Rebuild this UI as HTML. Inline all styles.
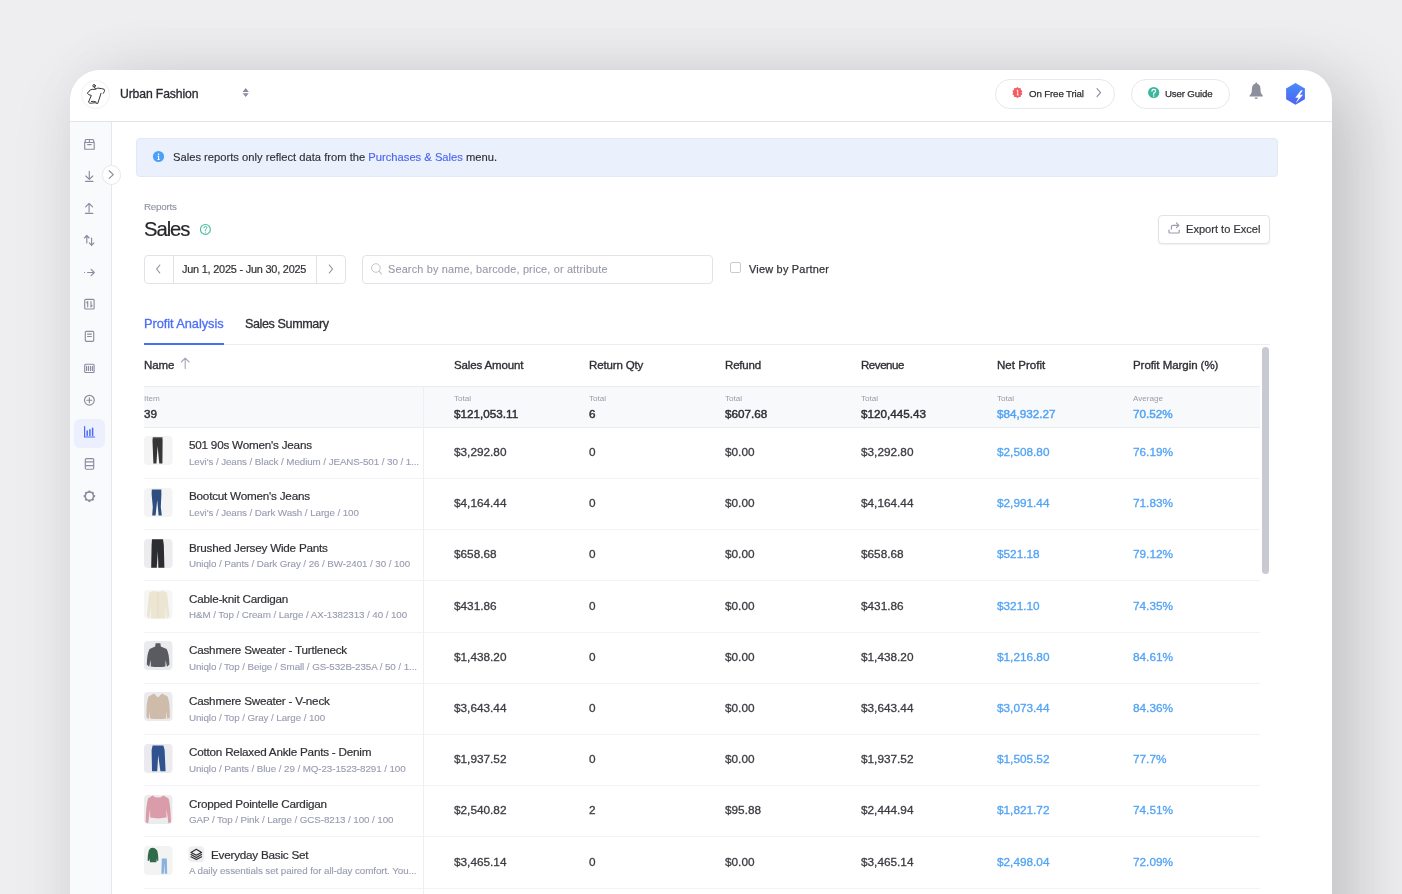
<!DOCTYPE html>
<html><head><meta charset="utf-8">
<style>
*{box-sizing:border-box;margin:0;padding:0}
html,body{width:1402px;height:894px;overflow:hidden}
body{position:relative;background:#eeeef0;font-family:"Liberation Sans",sans-serif;color:#2b2c31}
.a{position:absolute}
.t{position:absolute;white-space:nowrap;line-height:1;will-change:transform}
svg{position:absolute;overflow:visible}
#card{position:absolute;left:70px;top:70px;width:1262px;height:900px;background:#fff;border-radius:30px 30px 0 0;box-shadow:0 12px 70px rgba(0,0,0,0.07), 28px 12px 70px rgba(0,0,0,0.14)}
.hl{position:absolute;height:1px;background:#ededf1}
.vl{position:absolute;width:1px;background:#ededf1}
.pill{position:absolute;border:1px solid #e7e8ed;border-radius:16px;background:#fff}
.box{position:absolute;border:1px solid #e2e3e8;border-radius:4px;background:#fff}
.thumb{position:absolute;width:28px;height:29px;border-radius:4px;background:#f3f3f4;overflow:hidden}
</style></head><body>
<div id="card"></div>
<div class="hl" style="left:70px;top:121px;width:1262px;background:#e3e4ea"></div>
<div class="a" style="left:70px;top:122px;width:41px;height:772px;background:#f9fafc"></div>
<div class="vl" style="left:111px;top:122px;height:772px;background:#e6e7ec"></div>
<div class="a" style="left:80.8px;top:79.8px;width:29px;height:29px;border-radius:50%;border:1px solid #f1f1f4;background:#fff"></div>
<div class="t" style="left:119.80px;top:88.17px;font-size:12.2px;color:#2a2b30;letter-spacing:-0.121px;-webkit-text-stroke:0.3px #2a2b30;">Urban Fashion</div>
<div class="pill" style="left:995px;top:79px;width:120px;height:30px"></div>
<div class="pill" style="left:1131px;top:79px;width:99px;height:30px"></div>
<div class="t" style="left:1029.00px;top:89.39px;font-size:9.7px;color:#2f3035;letter-spacing:-0.128px;-webkit-text-stroke:0.25px #2f3035;">On Free Trial</div>
<div class="t" style="left:1165.40px;top:89.39px;font-size:9.7px;color:#2f3035;letter-spacing:-0.156px;-webkit-text-stroke:0.25px #2f3035;">User Guide</div>
<div class="a" style="left:136px;top:138px;width:1142px;height:38.5px;border-radius:4px;background:#ebf1fc;border:1px solid #e1e8f6"></div>
<div class="t" style="left:173.40px;top:151.92px;font-size:11.2px;color:#2f3035;letter-spacing:0.002px;-webkit-text-stroke:0.15px #2f3035;">Sales reports only reflect data from the <span style="color:#4b66f1;-webkit-text-stroke:0.15px #4b66f1">Purchases &amp; Sales</span> menu.</div>
<div class="t" style="left:143.80px;top:202.40px;font-size:9.8px;color:#8e91a0;letter-spacing:-0.219px;-webkit-text-stroke:0.1px #8e91a0;">Reports</div>
<div class="t" style="left:144.20px;top:218.90px;font-size:20.2px;color:#25262b;letter-spacing:-1.025px;-webkit-text-stroke:0.2px #25262b;">Sales</div>
<div class="box" style="left:1158px;top:215px;width:112px;height:29px;box-shadow:0 1px 2px rgba(0,0,0,0.06)"></div>
<div class="t" style="left:1185.70px;top:224.00px;font-size:11.1px;color:#34353a;letter-spacing:-0.008px;-webkit-text-stroke:0.2px #34353a;">Export to Excel</div>
<div class="box" style="left:144px;top:255px;width:202px;height:29px"></div>
<div class="vl" style="left:173px;top:256px;height:27px;background:#e2e3e8"></div>
<div class="vl" style="left:316px;top:256px;height:27px;background:#e2e3e8"></div>
<div class="t" style="left:182.40px;top:263.77px;font-size:10.9px;color:#2f3035;letter-spacing:-0.207px;-webkit-text-stroke:0.2px #2f3035;">Jun 1, 2025 - Jun 30, 2025</div>
<div class="box" style="left:362px;top:255px;width:351px;height:29px"></div>
<div class="t" style="left:388.20px;top:263.77px;font-size:10.9px;color:#9799aa;letter-spacing:0.165px;-webkit-text-stroke:0.1px #9799aa;">Search by name, barcode, price, or attribute</div>
<div class="a" style="left:730px;top:262px;width:11px;height:11px;border:1px solid #c9cad3;border-radius:2px"></div>
<div class="t" style="left:749.00px;top:263.97px;font-size:10.9px;color:#34353a;letter-spacing:0.237px;-webkit-text-stroke:0.25px #34353a;">View by Partner</div>
<div class="t" style="left:143.80px;top:318.06px;font-size:12.8px;color:#4b6ef6;letter-spacing:-0.055px;-webkit-text-stroke:0.3px #4b6ef6;">Profit Analysis</div>
<div class="t" style="left:244.70px;top:318.23px;font-size:12.6px;color:#2f3035;letter-spacing:-0.408px;-webkit-text-stroke:0.3px #2f3035;">Sales Summary</div>
<div class="hl" style="left:144px;top:344px;width:1126px;background:#ededf1"></div>
<div class="a" style="left:144px;top:343px;width:80px;height:2px;background:#4b6ef6"></div>
<svg style="left:0;top:0" width="1" height="1">
<g fill="none" stroke="#2a2a2e" stroke-width="0.95" stroke-linecap="round" stroke-linejoin="round">
<circle cx="94.1" cy="85.8" r="1.25"/>
<path d="M94.4 87.1 L95.6 89"/>
<path d="M89.3 90.9 Q90.6 89.6 92.1 89.3 Q94 89.6 95.8 89.1 Q96.8 88.3 97.8 88.1 Q101.5 88.4 104.2 89.3 Q104.9 90.3 104.4 91.4 L103.3 93.3"/>
<path d="M89.3 90.9 Q88 91.8 87.4 93.4 Q88.4 95 91.3 95.4 L88.5 102.2 Q89.2 103.4 91.5 103.2 Q94.5 102.5 95.5 102.9 Q96.8 103.7 97.8 103.4 L101 93.3"/>
<path d="M91.4 101.4 Q93.6 101.3 95 101.6 L96.2 102.2"/>
</g>
<path d="M245.7 87.9 L248.8 91.9 L242.6 91.9 Z M242.7 93.2 L248.7 93.2 L245.7 97.1 Z" fill="#8a8c9f"/>
<!-- red badge -->
<path d="M1017.4 87 L1018.8 88.2 L1020.6 88.1 L1020.9 89.9 L1022.4 91 L1021.6 92.6 L1022.4 94.2 L1020.9 95.2 L1020.6 97 L1018.8 96.9 L1017.4 98 L1016 96.9 L1014.2 97 L1013.9 95.2 L1012.4 94.2 L1013.2 92.6 L1012.4 91 L1013.9 89.9 L1014.2 88.1 L1016 88.2 Z" fill="#f65b62"/>
<path d="M1016.7 90.6 L1017.7 90 L1017.7 94.9 M1016.8 94.9 L1018.7 94.9" stroke="#fff" stroke-width="0.9" fill="none"/>
<!-- chevron in pill -->
<path d="M1097 88.6 L1100.6 92.6 L1097 96.6" stroke="#8a8c9f" stroke-width="1.1" fill="none" stroke-linecap="round" stroke-linejoin="round"/>
<!-- green ? -->
<circle cx="1153.7" cy="92.5" r="5.6" fill="#3bb79c"/>
<path d="M1151.9 91.1 Q1152 89.3 1153.8 89.3 Q1155.6 89.3 1155.6 90.9 Q1155.6 92 1154.4 92.6 Q1153.7 93 1153.7 94.3" stroke="#fff" stroke-width="1.2" fill="none" stroke-linecap="round"/>
<circle cx="1153.7" cy="96" r="0.75" fill="#fff"/>
<!-- bell -->
<path d="M1256.2 82.2 Q1257 82.4 1257 83.6 Q1260.2 84.7 1260.4 88.3 L1260.7 92.2 Q1261.2 94.2 1262.8 95.4 L1262.8 96.5 L1249.6 96.5 L1249.6 95.4 Q1251.2 94.2 1251.7 92.2 L1252 88.3 Q1252.2 84.7 1255.4 83.6 Q1255.4 82.4 1256.2 82.2 Z" fill="#8c8e9c"/>
<path d="M1254.5 97.4 L1257.9 97.4 Q1257.5 99 1256.2 99 Q1254.9 99 1254.5 97.4 Z" fill="#8c8e9c"/>
<!-- hexagon -->
<defs><linearGradient id="hexg" x1="0" y1="0" x2="0" y2="1"><stop offset="0" stop-color="#4a8bf9"/><stop offset="1" stop-color="#4e63f4"/></linearGradient></defs>
<path d="M1295.5 83 L1304.9 88.4 L1304.9 99.3 L1295.5 104.7 L1286.1 99.3 L1286.1 88.4 Z" fill="url(#hexg)"/>
<path d="M1301 90.2 L1295.3 97.8 L1298.5 97.8 L1295.6 103.4 L1303 94.8 L1299.7 94.8 L1302.8 90.5 Z" fill="#fff"/>
</svg>
<div class="a" style="left:74px;top:418.5px;width:30.5px;height:29.5px;border-radius:6px;background:#eceffd"></div>
<svg style="left:0;top:0" width="1" height="1">
<g fill="none" stroke="#8a8d9f" stroke-width="1.15" stroke-linecap="round" stroke-linejoin="round">
<path d="M84.7 142.5 L85.8 139.5 L93 139.5 L94.2 142.5 M84.7 142.5 L94.2 142.5 L94.2 149.2 L84.7 149.2 Z M89.45 139.5 L89.45 142.5 M87.6 144.6 L91.2 144.6"/>
<path d="M89.3 171.3 L89.3 179.2 M85.8 176 L89.3 179.4 L92.8 176 M85.6 181.4 L92.9 181.4"/>
<path d="M89.1 203.4 L89.1 212 M85.6 206.9 L89.1 203.4 L92.6 206.9 M85.4 213.4 L92.8 213.4"/>
<path d="M86.8 235.5 L86.8 243 M84.5 238 L86.8 235.5 L89.1 238 M91.6 238 L91.6 245.4 M89.3 242.9 L91.6 245.4 L93.9 242.9"/>
<path d="M84.5 272.5 L84.6 272.5 M87.6 272.5 L94.2 272.5 M91.1 269.4 L94.3 272.5 L91.1 275.6"/>
<rect x="84.7" y="299.4" width="9.4" height="9.6" rx="1"/>
<path d="M87.7 301.5 L87.7 306.8 M86.7 302.7 L87.7 301.5 M91 301.6 L91 306.9 L92.1 305.6"/>
<rect x="85.3" y="331.4" width="8.4" height="9.9" rx="1"/>
<path d="M87.5 334.1 L91.4 334.1 M87.5 336.5 L91.4 336.5"/>
<rect x="84.7" y="364.2" width="9.4" height="8.3" rx="1"/>
<path d="M86.6 366.4 L86.6 370.4 M88.5 366.4 L88.5 370.4 M90.5 366.4 L90.5 370.4 M92.4 366.4 L92.4 370.4"/>
<circle cx="89.4" cy="400.2" r="4.9"/>
<path d="M86.9 400.2 L91.9 400.2 M89.4 397.7 L89.4 402.7"/>
<rect x="85.3" y="458.6" width="8.4" height="10.6" rx="1.2"/>
<path d="M85.5 461.9 L93.5 461.9 M85.5 465.6 L93.5 465.6"/>
<circle cx="89.4" cy="496.2" r="4.1" stroke-width="1.5"/><rect x="88.30" y="490.50" width="2.2" height="2" rx="0.4" fill="#8a8d9f" stroke="none" transform="rotate(0 89.4 496.2)"/><rect x="88.30" y="490.50" width="2.2" height="2" rx="0.4" fill="#8a8d9f" stroke="none" transform="rotate(45 89.4 496.2)"/><rect x="88.30" y="490.50" width="2.2" height="2" rx="0.4" fill="#8a8d9f" stroke="none" transform="rotate(90 89.4 496.2)"/><rect x="88.30" y="490.50" width="2.2" height="2" rx="0.4" fill="#8a8d9f" stroke="none" transform="rotate(135 89.4 496.2)"/><rect x="88.30" y="490.50" width="2.2" height="2" rx="0.4" fill="#8a8d9f" stroke="none" transform="rotate(180 89.4 496.2)"/><rect x="88.30" y="490.50" width="2.2" height="2" rx="0.4" fill="#8a8d9f" stroke="none" transform="rotate(225 89.4 496.2)"/><rect x="88.30" y="490.50" width="2.2" height="2" rx="0.4" fill="#8a8d9f" stroke="none" transform="rotate(270 89.4 496.2)"/><rect x="88.30" y="490.50" width="2.2" height="2" rx="0.4" fill="#8a8d9f" stroke="none" transform="rotate(315 89.4 496.2)"/>
</g>
<g stroke="#4d6cf6" fill="none" stroke-linecap="round">
<path d="M84.6 426.6 L84.6 437 L94.6 437" stroke-width="1.2"/>
<path d="M87.2 431 L87.2 435.4 M89.9 429.7 L89.9 435.4 M92.6 428.3 L92.6 435.4" stroke-width="1.5"/>
</g>
</svg>
<div class="a" style="left:101.5px;top:165px;width:19.5px;height:19.5px;border-radius:50%;background:#fff;border:1px solid #e7e8ec"></div>
<svg style="left:0;top:0" width="1" height="1"><path d="M109.2 170.8 L113.3 174.6 L109.2 178.4" fill="none" stroke="#8a8d9f" stroke-width="1.2" stroke-linecap="round" stroke-linejoin="round"/></svg>
<svg style="left:0;top:0" width="1" height="1">
<circle cx="158.5" cy="156.5" r="5.6" fill="#4da0f7"/>
<circle cx="158.55" cy="154.3" r="0.8" fill="#fff"/>
<path d="M157.6 156.2 L158.6 156.2 L158.6 159.4 M157.5 159.5 L159.7 159.5" stroke="#fff" stroke-width="1.1" fill="none"/>
<circle cx="205.4" cy="229.4" r="4.95" fill="none" stroke="#45bb9e" stroke-width="1.1"/>
<path d="M203.9 227.9 Q204 226.4 205.5 226.4 Q206.9 226.4 206.9 227.7 Q206.9 228.6 206 229.1 Q205.4 229.5 205.4 230.5" stroke="#45bb9e" stroke-width="1" fill="none" stroke-linecap="round"/>
<circle cx="205.4" cy="232.1" r="0.6" fill="#45bb9e"/>
<g fill="none" stroke="#9a9cae" stroke-width="1.2" stroke-linecap="round" stroke-linejoin="round">
<path d="M1169 230 L1169 232.2 Q1169 233 1169.8 233 L1178.4 233 Q1179.2 233 1179.2 232.2 L1179.2 230"/>
<path d="M1171.4 229.1 L1171.4 227 Q1171.4 225.3 1173.1 225.3 L1178.5 225.3 M1176.5 222.9 L1178.8 225.3 L1176.5 227.7"/>
</g>
<path d="M159.8 265 L156.6 269 L159.8 273" fill="none" stroke="#8a8d9f" stroke-width="1.1" stroke-linecap="round" stroke-linejoin="round"/>
<path d="M329.3 265 L332.5 269 L329.3 273" fill="none" stroke="#8a8d9f" stroke-width="1.1" stroke-linecap="round" stroke-linejoin="round"/>
<circle cx="375.9" cy="268" r="4.3" fill="none" stroke="#c2c3cb" stroke-width="1"/>
<path d="M379 271.2 L381.4 273.8" stroke="#c2c3cb" stroke-width="1.1" stroke-linecap="round"/>
</svg>
<div class="a" style="left:144px;top:386px;width:1116px;height:41px;background:#f8f9fb"></div>
<div class="hl" style="left:144px;top:385.6px;width:1116px;background:#ebecf0"></div>
<div class="hl" style="left:144px;top:426.5px;width:1116px;background:#ebecf0"></div>
<div class="t" style="left:144.00px;top:360.27px;font-size:11.5px;color:#2f3035;letter-spacing:-0.062px;-webkit-text-stroke:0.35px #2f3035;">Name</div>
<svg style="left:0;top:0" width="1" height="1"><path d="M185.2 358.2 L185.2 368.4 M181.3 362 L185.2 358.1 L189.1 362" fill="none" stroke="#a4a6b5" stroke-width="1.1" stroke-linecap="round" stroke-linejoin="round"/></svg>
<div class="t" style="left:453.60px;top:360.27px;font-size:11.5px;color:#2f3035;letter-spacing:-0.143px;-webkit-text-stroke:0.35px #2f3035;">Sales Amount</div>
<div class="t" style="left:589.40px;top:360.27px;font-size:11.5px;color:#2f3035;letter-spacing:-0.145px;-webkit-text-stroke:0.35px #2f3035;">Return Qty</div>
<div class="t" style="left:725.20px;top:360.27px;font-size:11.5px;color:#2f3035;letter-spacing:-0.179px;-webkit-text-stroke:0.35px #2f3035;">Refund</div>
<div class="t" style="left:861.00px;top:360.27px;font-size:11.5px;color:#2f3035;letter-spacing:-0.441px;-webkit-text-stroke:0.35px #2f3035;">Revenue</div>
<div class="t" style="left:996.90px;top:360.27px;font-size:11.5px;color:#2f3035;letter-spacing:0.040px;-webkit-text-stroke:0.35px #2f3035;">Net Profit</div>
<div class="t" style="left:1132.70px;top:360.27px;font-size:11.5px;color:#2f3035;letter-spacing:-0.055px;-webkit-text-stroke:0.35px #2f3035;">Profit Margin (%)</div>
<div class="t" style="left:144.00px;top:394.94px;font-size:8.1px;color:#9a9cab;">Item</div>
<div class="t" style="left:144.00px;top:407.50px;font-size:11.7px;color:#2f3035;-webkit-text-stroke:0.45px #2f3035;">39</div>
<div class="t" style="left:453.60px;top:394.94px;font-size:8.1px;color:#9a9cab;">Total</div>
<div class="t" style="left:453.60px;top:407.50px;font-size:11.7px;color:#2f3035;-webkit-text-stroke:0.45px #2f3035;">$121,053.11</div>
<div class="t" style="left:589.40px;top:394.94px;font-size:8.1px;color:#9a9cab;">Total</div>
<div class="t" style="left:589.40px;top:407.50px;font-size:11.7px;color:#2f3035;-webkit-text-stroke:0.45px #2f3035;">6</div>
<div class="t" style="left:725.20px;top:394.94px;font-size:8.1px;color:#9a9cab;">Total</div>
<div class="t" style="left:725.20px;top:407.50px;font-size:11.7px;color:#2f3035;-webkit-text-stroke:0.45px #2f3035;">$607.68</div>
<div class="t" style="left:861.00px;top:394.94px;font-size:8.1px;color:#9a9cab;">Total</div>
<div class="t" style="left:861.00px;top:407.50px;font-size:11.7px;color:#2f3035;-webkit-text-stroke:0.45px #2f3035;">$120,445.43</div>
<div class="t" style="left:996.90px;top:394.94px;font-size:8.1px;color:#9a9cab;">Total</div>
<div class="t" style="left:996.90px;top:407.50px;font-size:11.7px;color:#52a3f4;-webkit-text-stroke:0.45px #52a3f4;">$84,932.27</div>
<div class="t" style="left:1132.70px;top:394.94px;font-size:8.1px;color:#9a9cab;">Average</div>
<div class="t" style="left:1132.70px;top:407.50px;font-size:11.7px;color:#52a3f4;-webkit-text-stroke:0.45px #52a3f4;">70.52%</div>
<div class="hl" style="left:144px;top:477.9px;width:1116px;background:#f3f3f6"></div>
<div class="t" style="left:188.60px;top:439.20px;font-size:11.7px;color:#303136;-webkit-text-stroke:0.2px #303136;letter-spacing:-0.22px;">501 90s Women's Jeans</div>
<div class="t" style="left:188.60px;top:456.80px;font-size:9.8px;color:#989bb0;-webkit-text-stroke:0.12px #989bb0;letter-spacing:-0.08px;">Levi's / Jeans / Black / Medium / JEANS-501 / 30 / 1...</div>
<div class="t" style="left:453.60px;top:446.91px;font-size:11.8px;color:#3b3c42;-webkit-text-stroke:0.3px #3b3c42;">$3,292.80</div>
<div class="t" style="left:589.40px;top:446.91px;font-size:11.8px;color:#3b3c42;-webkit-text-stroke:0.3px #3b3c42;">0</div>
<div class="t" style="left:725.20px;top:446.91px;font-size:11.8px;color:#3b3c42;-webkit-text-stroke:0.3px #3b3c42;">$0.00</div>
<div class="t" style="left:861.00px;top:446.91px;font-size:11.8px;color:#3b3c42;-webkit-text-stroke:0.3px #3b3c42;">$3,292.80</div>
<div class="t" style="left:996.90px;top:446.91px;font-size:11.8px;color:#52a3f4;-webkit-text-stroke:0.3px #52a3f4;">$2,508.80</div>
<div class="t" style="left:1132.70px;top:446.91px;font-size:11.8px;color:#52a3f4;-webkit-text-stroke:0.3px #52a3f4;">76.19%</div>
<div class="hl" style="left:144px;top:529.1px;width:1116px;background:#f3f3f6"></div>
<div class="t" style="left:188.60px;top:490.40px;font-size:11.7px;color:#303136;-webkit-text-stroke:0.2px #303136;letter-spacing:-0.22px;">Bootcut Women's Jeans</div>
<div class="t" style="left:188.60px;top:508.00px;font-size:9.8px;color:#989bb0;-webkit-text-stroke:0.12px #989bb0;letter-spacing:-0.08px;">Levi's / Jeans / Dark Wash / Large / 100</div>
<div class="t" style="left:453.60px;top:498.11px;font-size:11.8px;color:#3b3c42;-webkit-text-stroke:0.3px #3b3c42;">$4,164.44</div>
<div class="t" style="left:589.40px;top:498.11px;font-size:11.8px;color:#3b3c42;-webkit-text-stroke:0.3px #3b3c42;">0</div>
<div class="t" style="left:725.20px;top:498.11px;font-size:11.8px;color:#3b3c42;-webkit-text-stroke:0.3px #3b3c42;">$0.00</div>
<div class="t" style="left:861.00px;top:498.11px;font-size:11.8px;color:#3b3c42;-webkit-text-stroke:0.3px #3b3c42;">$4,164.44</div>
<div class="t" style="left:996.90px;top:498.11px;font-size:11.8px;color:#52a3f4;-webkit-text-stroke:0.3px #52a3f4;">$2,991.44</div>
<div class="t" style="left:1132.70px;top:498.11px;font-size:11.8px;color:#52a3f4;-webkit-text-stroke:0.3px #52a3f4;">71.83%</div>
<div class="hl" style="left:144px;top:580.3px;width:1116px;background:#f3f3f6"></div>
<div class="t" style="left:188.60px;top:541.60px;font-size:11.7px;color:#303136;-webkit-text-stroke:0.2px #303136;letter-spacing:-0.22px;">Brushed Jersey Wide Pants</div>
<div class="t" style="left:188.60px;top:559.20px;font-size:9.8px;color:#989bb0;-webkit-text-stroke:0.12px #989bb0;letter-spacing:-0.08px;">Uniqlo / Pants / Dark Gray / 26 / BW-2401 / 30 / 100</div>
<div class="t" style="left:453.60px;top:549.31px;font-size:11.8px;color:#3b3c42;-webkit-text-stroke:0.3px #3b3c42;">$658.68</div>
<div class="t" style="left:589.40px;top:549.31px;font-size:11.8px;color:#3b3c42;-webkit-text-stroke:0.3px #3b3c42;">0</div>
<div class="t" style="left:725.20px;top:549.31px;font-size:11.8px;color:#3b3c42;-webkit-text-stroke:0.3px #3b3c42;">$0.00</div>
<div class="t" style="left:861.00px;top:549.31px;font-size:11.8px;color:#3b3c42;-webkit-text-stroke:0.3px #3b3c42;">$658.68</div>
<div class="t" style="left:996.90px;top:549.31px;font-size:11.8px;color:#52a3f4;-webkit-text-stroke:0.3px #52a3f4;">$521.18</div>
<div class="t" style="left:1132.70px;top:549.31px;font-size:11.8px;color:#52a3f4;-webkit-text-stroke:0.3px #52a3f4;">79.12%</div>
<div class="hl" style="left:144px;top:631.5px;width:1116px;background:#f3f3f6"></div>
<div class="t" style="left:188.60px;top:592.80px;font-size:11.7px;color:#303136;-webkit-text-stroke:0.2px #303136;letter-spacing:-0.22px;">Cable-knit Cardigan</div>
<div class="t" style="left:188.60px;top:610.40px;font-size:9.8px;color:#989bb0;-webkit-text-stroke:0.12px #989bb0;letter-spacing:-0.08px;">H&amp;M / Top / Cream / Large / AX-1382313 / 40 / 100</div>
<div class="t" style="left:453.60px;top:600.51px;font-size:11.8px;color:#3b3c42;-webkit-text-stroke:0.3px #3b3c42;">$431.86</div>
<div class="t" style="left:589.40px;top:600.51px;font-size:11.8px;color:#3b3c42;-webkit-text-stroke:0.3px #3b3c42;">0</div>
<div class="t" style="left:725.20px;top:600.51px;font-size:11.8px;color:#3b3c42;-webkit-text-stroke:0.3px #3b3c42;">$0.00</div>
<div class="t" style="left:861.00px;top:600.51px;font-size:11.8px;color:#3b3c42;-webkit-text-stroke:0.3px #3b3c42;">$431.86</div>
<div class="t" style="left:996.90px;top:600.51px;font-size:11.8px;color:#52a3f4;-webkit-text-stroke:0.3px #52a3f4;">$321.10</div>
<div class="t" style="left:1132.70px;top:600.51px;font-size:11.8px;color:#52a3f4;-webkit-text-stroke:0.3px #52a3f4;">74.35%</div>
<div class="hl" style="left:144px;top:682.7px;width:1116px;background:#f3f3f6"></div>
<div class="t" style="left:188.60px;top:644.00px;font-size:11.7px;color:#303136;-webkit-text-stroke:0.2px #303136;letter-spacing:-0.22px;">Cashmere Sweater - Turtleneck</div>
<div class="t" style="left:188.60px;top:661.60px;font-size:9.8px;color:#989bb0;-webkit-text-stroke:0.12px #989bb0;letter-spacing:-0.08px;">Uniqlo / Top / Beige / Small / GS-532B-235A / 50 / 1...</div>
<div class="t" style="left:453.60px;top:651.71px;font-size:11.8px;color:#3b3c42;-webkit-text-stroke:0.3px #3b3c42;">$1,438.20</div>
<div class="t" style="left:589.40px;top:651.71px;font-size:11.8px;color:#3b3c42;-webkit-text-stroke:0.3px #3b3c42;">0</div>
<div class="t" style="left:725.20px;top:651.71px;font-size:11.8px;color:#3b3c42;-webkit-text-stroke:0.3px #3b3c42;">$0.00</div>
<div class="t" style="left:861.00px;top:651.71px;font-size:11.8px;color:#3b3c42;-webkit-text-stroke:0.3px #3b3c42;">$1,438.20</div>
<div class="t" style="left:996.90px;top:651.71px;font-size:11.8px;color:#52a3f4;-webkit-text-stroke:0.3px #52a3f4;">$1,216.80</div>
<div class="t" style="left:1132.70px;top:651.71px;font-size:11.8px;color:#52a3f4;-webkit-text-stroke:0.3px #52a3f4;">84.61%</div>
<div class="hl" style="left:144px;top:733.9px;width:1116px;background:#f3f3f6"></div>
<div class="t" style="left:188.60px;top:695.20px;font-size:11.7px;color:#303136;-webkit-text-stroke:0.2px #303136;letter-spacing:-0.22px;">Cashmere Sweater - V-neck</div>
<div class="t" style="left:188.60px;top:712.80px;font-size:9.8px;color:#989bb0;-webkit-text-stroke:0.12px #989bb0;letter-spacing:-0.08px;">Uniqlo / Top / Gray / Large / 100</div>
<div class="t" style="left:453.60px;top:702.91px;font-size:11.8px;color:#3b3c42;-webkit-text-stroke:0.3px #3b3c42;">$3,643.44</div>
<div class="t" style="left:589.40px;top:702.91px;font-size:11.8px;color:#3b3c42;-webkit-text-stroke:0.3px #3b3c42;">0</div>
<div class="t" style="left:725.20px;top:702.91px;font-size:11.8px;color:#3b3c42;-webkit-text-stroke:0.3px #3b3c42;">$0.00</div>
<div class="t" style="left:861.00px;top:702.91px;font-size:11.8px;color:#3b3c42;-webkit-text-stroke:0.3px #3b3c42;">$3,643.44</div>
<div class="t" style="left:996.90px;top:702.91px;font-size:11.8px;color:#52a3f4;-webkit-text-stroke:0.3px #52a3f4;">$3,073.44</div>
<div class="t" style="left:1132.70px;top:702.91px;font-size:11.8px;color:#52a3f4;-webkit-text-stroke:0.3px #52a3f4;">84.36%</div>
<div class="hl" style="left:144px;top:785.1px;width:1116px;background:#f3f3f6"></div>
<div class="t" style="left:188.60px;top:746.40px;font-size:11.7px;color:#303136;-webkit-text-stroke:0.2px #303136;letter-spacing:-0.22px;">Cotton Relaxed Ankle Pants - Denim</div>
<div class="t" style="left:188.60px;top:764.00px;font-size:9.8px;color:#989bb0;-webkit-text-stroke:0.12px #989bb0;letter-spacing:-0.08px;">Uniqlo / Pants / Blue / 29 / MQ-23-1523-8291 / 100</div>
<div class="t" style="left:453.60px;top:754.11px;font-size:11.8px;color:#3b3c42;-webkit-text-stroke:0.3px #3b3c42;">$1,937.52</div>
<div class="t" style="left:589.40px;top:754.11px;font-size:11.8px;color:#3b3c42;-webkit-text-stroke:0.3px #3b3c42;">0</div>
<div class="t" style="left:725.20px;top:754.11px;font-size:11.8px;color:#3b3c42;-webkit-text-stroke:0.3px #3b3c42;">$0.00</div>
<div class="t" style="left:861.00px;top:754.11px;font-size:11.8px;color:#3b3c42;-webkit-text-stroke:0.3px #3b3c42;">$1,937.52</div>
<div class="t" style="left:996.90px;top:754.11px;font-size:11.8px;color:#52a3f4;-webkit-text-stroke:0.3px #52a3f4;">$1,505.52</div>
<div class="t" style="left:1132.70px;top:754.11px;font-size:11.8px;color:#52a3f4;-webkit-text-stroke:0.3px #52a3f4;">77.7%</div>
<div class="hl" style="left:144px;top:836.3px;width:1116px;background:#f3f3f6"></div>
<div class="t" style="left:188.60px;top:797.60px;font-size:11.7px;color:#303136;-webkit-text-stroke:0.2px #303136;letter-spacing:-0.22px;">Cropped Pointelle Cardigan</div>
<div class="t" style="left:188.60px;top:815.20px;font-size:9.8px;color:#989bb0;-webkit-text-stroke:0.12px #989bb0;letter-spacing:-0.08px;">GAP / Top / Pink / Large / GCS-8213 / 100 / 100</div>
<div class="t" style="left:453.60px;top:805.31px;font-size:11.8px;color:#3b3c42;-webkit-text-stroke:0.3px #3b3c42;">$2,540.82</div>
<div class="t" style="left:589.40px;top:805.31px;font-size:11.8px;color:#3b3c42;-webkit-text-stroke:0.3px #3b3c42;">2</div>
<div class="t" style="left:725.20px;top:805.31px;font-size:11.8px;color:#3b3c42;-webkit-text-stroke:0.3px #3b3c42;">$95.88</div>
<div class="t" style="left:861.00px;top:805.31px;font-size:11.8px;color:#3b3c42;-webkit-text-stroke:0.3px #3b3c42;">$2,444.94</div>
<div class="t" style="left:996.90px;top:805.31px;font-size:11.8px;color:#52a3f4;-webkit-text-stroke:0.3px #52a3f4;">$1,821.72</div>
<div class="t" style="left:1132.70px;top:805.31px;font-size:11.8px;color:#52a3f4;-webkit-text-stroke:0.3px #52a3f4;">74.51%</div>
<div class="hl" style="left:144px;top:887.5px;width:1116px;background:#f3f3f6"></div>
<div class="t" style="left:211.20px;top:848.80px;font-size:11.7px;color:#303136;-webkit-text-stroke:0.2px #303136;letter-spacing:-0.22px;">Everyday Basic Set</div>
<div class="t" style="left:188.60px;top:866.40px;font-size:9.8px;color:#989bb0;-webkit-text-stroke:0.12px #989bb0;letter-spacing:-0.08px;">A daily essentials set paired for all-day comfort. You...</div>
<div class="t" style="left:453.60px;top:856.51px;font-size:11.8px;color:#3b3c42;-webkit-text-stroke:0.3px #3b3c42;">$3,465.14</div>
<div class="t" style="left:589.40px;top:856.51px;font-size:11.8px;color:#3b3c42;-webkit-text-stroke:0.3px #3b3c42;">0</div>
<div class="t" style="left:725.20px;top:856.51px;font-size:11.8px;color:#3b3c42;-webkit-text-stroke:0.3px #3b3c42;">$0.00</div>
<div class="t" style="left:861.00px;top:856.51px;font-size:11.8px;color:#3b3c42;-webkit-text-stroke:0.3px #3b3c42;">$3,465.14</div>
<div class="t" style="left:996.90px;top:856.51px;font-size:11.8px;color:#52a3f4;-webkit-text-stroke:0.3px #52a3f4;">$2,498.04</div>
<div class="t" style="left:1132.70px;top:856.51px;font-size:11.8px;color:#52a3f4;-webkit-text-stroke:0.3px #52a3f4;">72.09%</div>
<div class="vl" style="left:423px;top:386px;height:520px;background:#eeeff2"></div>
<div class="a" style="left:1262px;top:346.5px;width:7px;height:227px;border-radius:4px;background:#c9c9d1"></div>
<svg style="left:144px;top:436.3px" width="28.5" height="29" viewBox="0 0 28.5 29"><rect x="0" y="0" width="28.5" height="29" rx="4" fill="#f4f4f5"/><path d="M8.7 1.5 L18.4 1.5 L18.6 5 L18.4 27.4 L15.3 27.4 L13.6 10 L12.4 27.4 L9.4 27.4 L8.5 5 Z" fill="#363534"/><path d="M9 1.5 L18.3 1.5 L18.3 2.6 L9 2.6Z" fill="#4a4a4a"/></svg>
<svg style="left:144px;top:487.5px" width="28.5" height="29" viewBox="0 0 28.5 29"><rect x="0" y="0" width="28.5" height="29" rx="4" fill="#f4f4f5"/><path d="M7.8 1.6 L17.3 1.6 L17.4 6 L16.8 19 L17.8 27.4 L14.6 27.4 L13.2 12 L11.6 27.4 L8.2 27.4 L8.8 19 L7.6 6 Z" fill="#2f4e80"/></svg>
<svg style="left:144px;top:538.7px" width="28.5" height="29" viewBox="0 0 28.5 29"><rect x="0" y="0" width="28.5" height="29" rx="4" fill="#ececef"/><path d="M8 0.2 L19 0.2 L19.8 6 L20.4 28.8 L14.8 28.8 L13.6 11 L12.8 28.8 L7.2 28.8 L7.6 6 Z" fill="#2b2d30"/><path d="M13.7 11 L14.6 28.8" stroke="#1f2022" stroke-width="0.5"/></svg>
<svg style="left:144px;top:589.9px" width="28.5" height="29" viewBox="0 0 28.5 29"><rect x="0" y="0" width="28.5" height="29" rx="4" fill="#f6f6f6"/><path d="M9.5 0.8 Q14 2.6 18.6 0.8 L23 2.8 L25.6 26 L22.8 28.6 L21.6 16 L21.4 28.4 L7 28.4 L6.8 16 L5.6 28.6 L2.8 26 L5.2 2.8 Z" fill="#ece5d2"/><path d="M14 2 L14 28" stroke="#dcd3bd" stroke-width="0.5"/></svg>
<svg style="left:144px;top:641.1px" width="28.5" height="29" viewBox="0 0 28.5 29"><rect x="0" y="0" width="28.5" height="29" rx="4" fill="#ebebef"/><path d="M11.6 2.2 L16.4 2.2 L16.8 5.4 L22.6 8 Q25.2 12 25.4 23.6 L23 25.8 L21.6 19 L21.4 25.4 Q14 26.6 6.8 25.4 L6.6 19 L5.2 25.8 L2.8 23.6 Q3 12 5.6 8 L11.2 5.4 Z" fill="#5a5b60"/></svg>
<svg style="left:144px;top:692.3px" width="28.5" height="29" viewBox="0 0 28.5 29"><rect x="0" y="0" width="28.5" height="29" rx="4" fill="#ebebef"/><path d="M10 1.6 L14 5.5 L18 1.6 L23.6 4.5 Q26 10 25.8 25.6 L23.4 27 L22.2 19 L22.2 26.4 Q14 27.6 6 26.4 L6 19 L4.8 27 L2.4 25.6 Q2.2 10 4.6 4.5 Z" fill="#cfbba9"/></svg>
<svg style="left:144px;top:743.5px" width="28.5" height="29" viewBox="0 0 28.5 29"><rect x="0" y="0" width="28.5" height="29" rx="4" fill="#ebebef"/><path d="M8.6 1.6 L19.4 1.6 L20.6 6 L21.6 27.2 L16.4 27.2 L14.2 11 L13.2 27.2 L8 27.2 L7.6 6 Z" fill="#30528e"/></svg>
<svg style="left:144px;top:794.7px" width="28.5" height="29" viewBox="0 0 28.5 29"><rect x="0" y="0" width="28.5" height="29" rx="4" fill="#ececee"/><path d="M8.6 0.4 Q14 4.8 19.4 0.4 L24.6 3.4 Q26.6 10 27 27.2 L24.4 28.2 L22.6 14 L22.4 22.6 Q14 24.2 6.2 22.6 L6 14 L4.2 28.2 L1.6 27.2 Q2 10 4 3.4 Z" fill="#d99ca8"/></svg>
<svg style="left:144px;top:845.9px" width="28.5" height="29" viewBox="0 0 28.5 29"><rect x="0" y="0" width="28.5" height="29" rx="4" fill="#f3f3f4"/><path d="M6.4 2.2 Q8.6 1.2 10.8 2.2 L13.2 4.6 Q14.2 8 14.4 14.6 L13.2 15 L12.8 12.4 L12.4 16.2 L6 16.2 L5.4 12.4 L5 15 L3.6 14.6 Q3.8 8 4.8 4.6 Z" fill="#2f6a4b"/><path d="M17.8 12.6 L22.8 12.6 L23.2 27.8 L20.8 27.8 L20.4 17 L19.8 27.8 L17.4 27.8 Z" fill="#88b2de"/></svg>
<svg style="left:0;top:0" width="1" height="1"><rect x="188.3" y="846.3" width="16" height="16" rx="4" fill="#efeff2"/>
<g fill="none" stroke="#2b2b2e" stroke-width="1.15" stroke-linejoin="round" stroke-linecap="round"><path d="M196.3 849.3 L201.6 852.4 L196.3 855.2 L191 852.4 Z"/><path d="M191 854.6 L196.3 857.4 L201.6 854.6"/><path d="M191 856.8 L196.3 859.6 L201.6 856.8"/></g></svg>
</body></html>
